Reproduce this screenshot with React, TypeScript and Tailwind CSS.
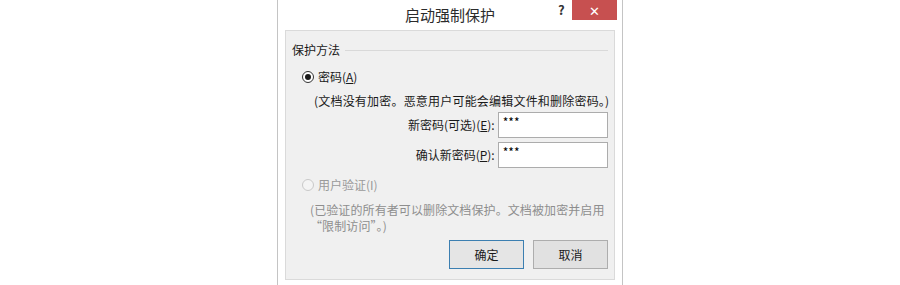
import React from "react"

const cjk = "font-['Noto_Sans_CJK_SC','Noto_Sans',sans-serif]"

function Radio({ checked, disabled }: { checked?: boolean; disabled?: boolean }) {
  return (
    <span
      className={`w-[12px] h-[12px] rounded-full border flex items-center justify-center ${
        disabled ? "border-[#c9c9c9] bg-[#f4f4f4]" : "border-[#333] bg-white"
      }`}
    >
      {checked && <span className="w-[6px] h-[6px] rounded-full bg-[#1a1a1a]" />}
    </span>
  )
}

function Field({ label, hot, value }: { label: string; hot: string; value: string }) {
  return (
    <div className="flex items-center h-[26px]">
      <div className="w-[211px] text-right pr-[3px] text-[12px] leading-4 text-[#1a1a1a]">
        {label}(<span className="underline">{hot}</span>):
      </div>
      <div className="w-[113px] h-full border border-[#acacac] bg-white pl-[4px] pt-[1px] text-[12px] leading-4 text-black">
        {value}
      </div>
    </div>
  )
}

export default function App() {
  return (
    <div className={`w-full h-[285px] bg-white flex justify-center ${cjk}`}>
      <div className="w-[346px] h-full border-x border-[#c4c4c4] bg-white flex flex-col px-[7px] pb-[5px] relative">
        {/* title bar */}
        <div className="h-[30px] flex items-center justify-center">
          <span className="text-[15px] leading-5 text-[#2b2b2b] -mt-[1px]">启动强制保护</span>
        </div>
        <span className="absolute left-[280px] top-[2px] text-[13px] leading-4 font-bold text-[#333]">?</span>
        <button className="absolute left-[294px] top-0 w-[45px] h-[20px] bg-[#c75050] flex items-center justify-center text-white text-[13px] leading-none">
          ✕
        </button>

        {/* content panel */}
        <div className="flex-1 bg-[#f0f0f0] border border-[#dadada] flex flex-col pl-[6px] pr-[6px]">
          <div className="mt-[11px] flex items-center h-4">
            <span className="text-[12px] leading-4 text-[#1a1a1a]">保护方法</span>
            <span className="flex-1 h-px bg-[#d9d9d9] ml-[5px]" />
          </div>

          <div className="mt-[11px] ml-[10px] flex items-center gap-[4px] h-4">
            <Radio checked />
            <span className="text-[12px] leading-4 text-[#1a1a1a]">
              密码(<span className="underline">A</span>)
            </span>
          </div>

          <div className="mt-[8px] ml-[22px] text-[12px] leading-4 text-[#1a1a1a] whitespace-nowrap tracking-[0.2px]">
            (文档没有加密。恶意用户可能会编辑文件和删除密码。)
          </div>

          <div className="mt-[3px] flex flex-col gap-[4px]">
            <Field label="新密码(可选)" hot="E" value="***" />
            <Field label="确认新密码" hot="P" value="***" />
          </div>

          <div className="mt-[9px] ml-[10px] flex items-center gap-[4px] h-4">
            <Radio disabled />
            <span className="text-[12px] leading-4 text-[#9a9a9a]">用户验证(I)</span>
          </div>

          <div className="mt-[9px] ml-[18px] text-[12px] leading-4 text-[#8e8e8e] tracking-[0.1px]">
            <div className="whitespace-nowrap">(已验证的所有者可以删除文档保护。文档被加密并启用</div>
            <div>“限制访问”。)</div>
          </div>

          <div className="mt-[6px] flex justify-end gap-[9px]">
            <button className="w-[75px] h-[29px] border border-[#3c7fb1] bg-[#e5e5e5] text-[12px] text-[#1a1a1a]">
              确定
            </button>
            <button className="w-[75px] h-[29px] border border-[#adadad] bg-[#e1e1e1] text-[12px] text-[#1a1a1a]">
              取消
            </button>
          </div>
        </div>
      </div>
    </div>
  )
}
